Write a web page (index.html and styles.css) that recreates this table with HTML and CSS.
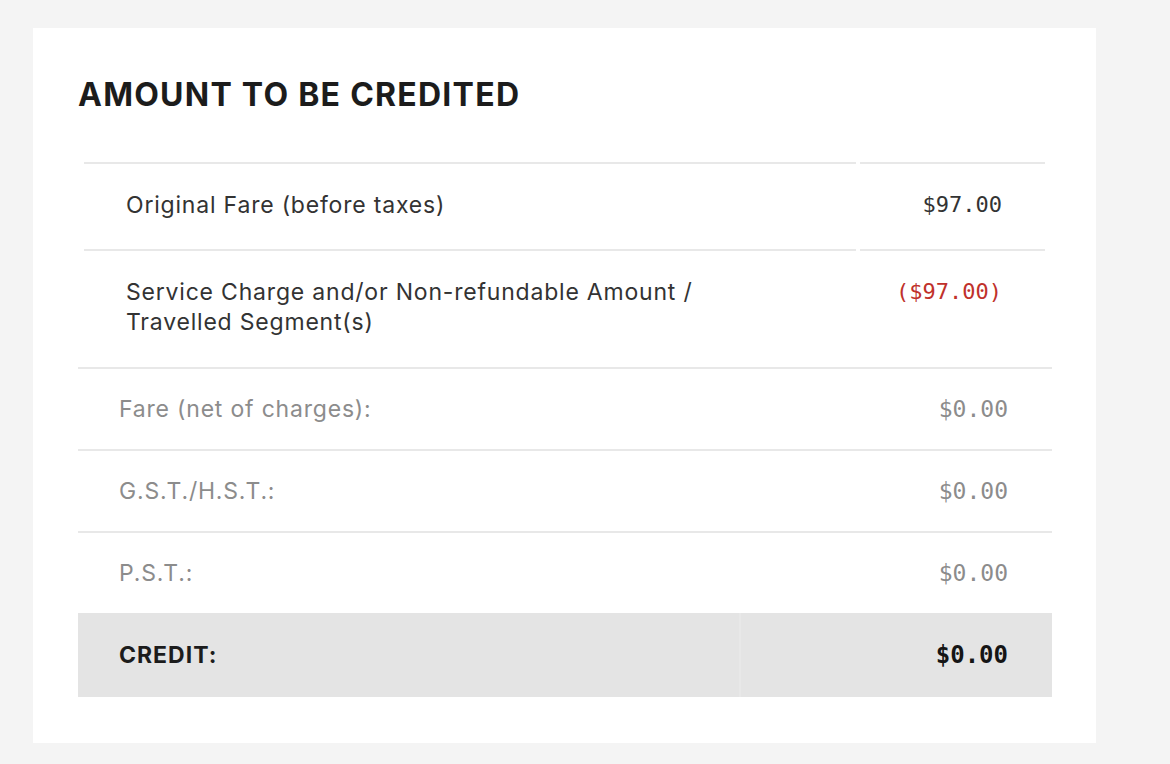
FILE: index.html
```html
<!DOCTYPE html>
<html lang="en">
<head>
<meta charset="utf-8">
<title>Amount to be credited</title>
<link rel="stylesheet" href="styles.css">
</head>
<body>
<main class="card">
  <h1 class="title">AMOUNT TO BE CREDITED</h1>
  <table class="fare-table">
    <colgroup><col class="col-label"><col class="col-amount"></colgroup>
    <tbody>
      <tr>
        <td class="label">Original Fare (before taxes)</td>
        <td class="amount">$97.00</td>
      </tr>
      <tr class="last-fare-row">
        <td class="label">Service Charge and/or Non-refundable Amount /<br>Travelled Segment(s)</td>
        <td class="amount negative">($97.00)</td>
      </tr>
    </tbody>
  </table>
  <table class="summary-table">
    <colgroup><col class="col-sum-label"><col class="col-sum-amount"></colgroup>
    <tbody>
      <tr>
        <td class="sum-label">Fare (net of charges):</td>
        <td class="sum-amount">$0.00</td>
      </tr>
      <tr>
        <td class="sum-label">G.S.T./H.S.T.:</td>
        <td class="sum-amount">$0.00</td>
      </tr>
      <tr>
        <td class="sum-label">P.S.T.:</td>
        <td class="sum-amount">$0.00</td>
      </tr>
      <tr class="total-row">
        <td class="sum-label total-label">CREDIT:</td>
        <td class="sum-amount total-amount">$0.00</td>
      </tr>
    </tbody>
  </table>
</main>
</body>
</html>
```

FILE: styles.css
```css
html, body {
  margin: 0;
  padding: 0;
}

body {
  background: #f4f4f4;
  padding: 28px 0 0 33px;
  font-family: Inter, "Liberation Sans", sans-serif;
  color: #333;
}

.card {
  box-sizing: border-box;
  width: 1063px;
  height: 715px;
  background: #ffffff;
  padding: 45px 44px 45px 45px;
}

.title {
  margin: 2px 0 47px 0;
  font-size: 32px;
  line-height: 40px;
  font-weight: 700;
  color: #1c1c1c;
  letter-spacing: 1.25px;
}

.fare-table {
  table-layout: fixed;
  border-collapse: separate;
  border-spacing: 4px 0;
  width: calc(100% - 5px);
  margin: 0 3px 0 2px;
}

.col-amount {
  width: 185px;
}

.fare-table td {
  border-top: 2px solid #e8e8e8;
  padding: 26px 0 29px 0;
  vertical-align: top;
  font-size: 23px;
  line-height: 30px;
}

.fare-table .last-fare-row td {
  padding-bottom: 30px;
}

.fare-table .label {
  padding-left: 42px;
  color: #333;
  font-weight: 400;
  letter-spacing: 0.8px;
}

.amount {
  text-align: right;
  padding-right: 43px !important;
  font-family: "DejaVu Sans Mono", "Liberation Mono", monospace;
  font-size: 22px !important;
  color: #333;
}

.amount.negative {
  color: #c0312b;
}

.summary-table {
  table-layout: fixed;
  border-collapse: collapse;
  width: 100%;
}

.col-sum-amount {
  width: 312px;
}

.summary-table td {
  border-top: 2px solid #e8e8e8;
  padding: 25px 0;
  font-size: 23px;
  line-height: 30px;
  vertical-align: middle;
}

.sum-label {
  padding-left: 41px !important;
  color: #8c8c8c;
  letter-spacing: 0.8px;
}

.sum-amount {
  text-align: right;
  padding-right: 44px !important;
  font-family: "DejaVu Sans Mono", "Liberation Mono", monospace;
  color: #8c8c8c;
}

.total-row td {
  background: #e4e4e4;
  border-top: none;
  padding: 27px 0;
}

.total-label {
  font-weight: 700;
  color: #1c1c1c;
  letter-spacing: 1px;
}

.total-amount {
  font-size: 24px !important;
  font-weight: 700;
  color: #151515;
  border-left: 2px solid #e8e8e8;
}
```
